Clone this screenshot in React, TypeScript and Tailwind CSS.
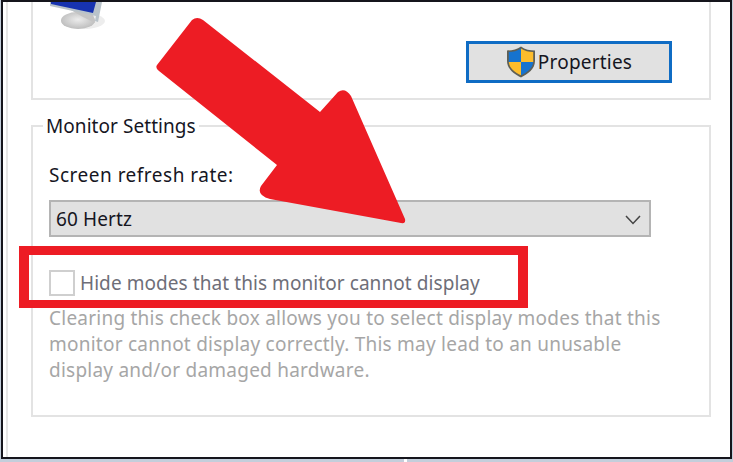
import React from 'react';

const font = { fontFamily: '"Noto Sans", sans-serif' };

// viewBox is in page pixels, only the bottom of the monitor is visible
const MonitorIcon = () => (
  <svg width="64" height="32" viewBox="51 2 64 32">
    <defs>
      <radialGradient id="base" cx="50%" cy="45%" r="60%">
        <stop offset="0%" stopColor="#ececec" />
        <stop offset="100%" stopColor="#b9b9b9" />
      </radialGradient>
    </defs>
    <ellipse cx="84" cy="21" rx="22" ry="8" fill="#000" opacity="0.07" />
    <ellipse cx="79" cy="20.500" rx="17" ry="8.500" fill="url(#base)" />
    <path d="M70 9 L94 14 L96 23 L84 17 Z" fill="#c4c4c4" />
    <path d="M51 2 L103 2 L99 22 L96 21 L97 16 L51 6 Z" fill="#b9c3ca" />
    <path d="M52 2 L97 2 L94 13 L52 4 Z" fill="#1733b0" />
  </svg>
);

const ShieldIcon = () => (
  <svg width="30" height="32" viewBox="0 0 30 32">
    <path d="M15 .5 C11 3.500 6 4.500 1 4.500 L1 15 C1 23 8 28 15 31.500 C22 28 29 23 29 15 L29 4.500 C24 4.500 19 3.500 15 .5 Z" fill="#5f5f55" />
    <path d="M15 2.500 C11.500 5 7 6 2.800 6 L2.800 16 L15 16 Z" fill="#1673cf" />
    <path d="M15 2.500 C18.500 5 23 6 27.200 6 L27.200 16 L15 16 Z" fill="#fdbd2c" />
    <path d="M2.800 16 C3.300 22.500 9 26.500 15 29.300 L15 16 Z" fill="#fdbd2c" />
    <path d="M27.200 16 C26.700 22.500 21 26.500 15 29.300 L15 16 Z" fill="#1673cf" />
  </svg>
);

// big red arrow pasted over the dialog
const RedArrow = () => (
  <svg className="absolute left-0 top-0 pointer-events-none" width="733" height="462" viewBox="0 0 733 462">
    <path
      d="M192 20 Q197 16 203 20 L320 112 L338 92 Q345 87 351 96 L405 219 Q406 224 401 223 L270 199 Q256 195 261 186 L277 165 L159 71 Q155 68 157 65 Z"
      fill="#ed1c24"
    />
  </svg>
);

export default function App() {
  return (
    <div className="relative w-[733px] h-[462px] overflow-hidden bg-[#c3cedb]" style={font}>
      <div className="w-[731px] h-[459px] ml-[1px] border-2 border-[#15151c] bg-white overflow-hidden">
        <div className="h-full ml-[3px] pl-[23px] pr-[19px] border-l-2 border-[#e6e6e6]">
          <div className="h-[98px] border-2 border-t-0 border-[#e3e3e3] flex justify-between">
            <div className="ml-[17px]">
              <MonitorIcon />
            </div>
            <div className="mt-[39px] mr-[37px] w-[206px] h-[42px] border-[3px] border-[#0f6cc4] bg-[#e1e1e1] flex items-center justify-center gap-[2px] text-[19px] tracking-[0.2px] text-[#16161f]">
              <ShieldIcon />
              <span>Properties</span>
            </div>
          </div>

          <div className="relative mt-[25px] h-[292px] border-2 border-[#e3e3e3] pl-[16px] pr-[58px]">
            <span className="absolute left-[10px] -top-[14px] bg-white px-[3px] text-[19px] leading-[26px] tracking-[0.06px] text-[#16161f]">
              Monitor Settings
            </span>
            <div className="pt-[35px] text-[19px] leading-[26px] tracking-[0.5px] text-[#16161f]">Screen refresh rate:</div>
            <div className="mt-[12px] h-[37px] border-2 border-[#b4b4b4] bg-[#e1e1e1] flex items-center justify-between pl-[5px] pr-[8px] pt-[2px] text-[19px] tracking-[0.12px] text-[#16161f]">
              <span>60 Hertz</span>
              <svg width="16" height="10" viewBox="0 0 16 10" fill="none" stroke="#444" strokeWidth="1.500">
                <path d="M1 1 L8 8.500 L15 1" />
              </svg>
            </div>
            <div className="mt-[33px] flex items-center gap-[5px]">
              <div className="w-[26px] h-[26px] border-2 border-[#cfcfcf] bg-white" />
              <span className="text-[19px] leading-[26px] tracking-[0.07px] text-[#6e6e78]">Hide modes that this monitor cannot display</span>
            </div>
            <p className="mt-[9px] w-[625px] text-[19px] leading-[26px] tracking-[0.235px] text-[#a6a6a6]">
              Clearing this check box allows you to select display modes that this monitor cannot display correctly. This may lead to an unusable display and/or damaged hardware.
            </p>
          </div>
        </div>
      </div>

      <div className="absolute left-[404px] bottom-0 w-[3px] h-[3px] bg-white" />
      <RedArrow />
      {/* highlight box around the check box row */}
      <div className="absolute left-[19px] top-[246px] w-[509px] h-[62px] border-x-[10px] border-t-[9px] border-b-[8px] border-[#ed1c24]" />
    </div>
  );
}
